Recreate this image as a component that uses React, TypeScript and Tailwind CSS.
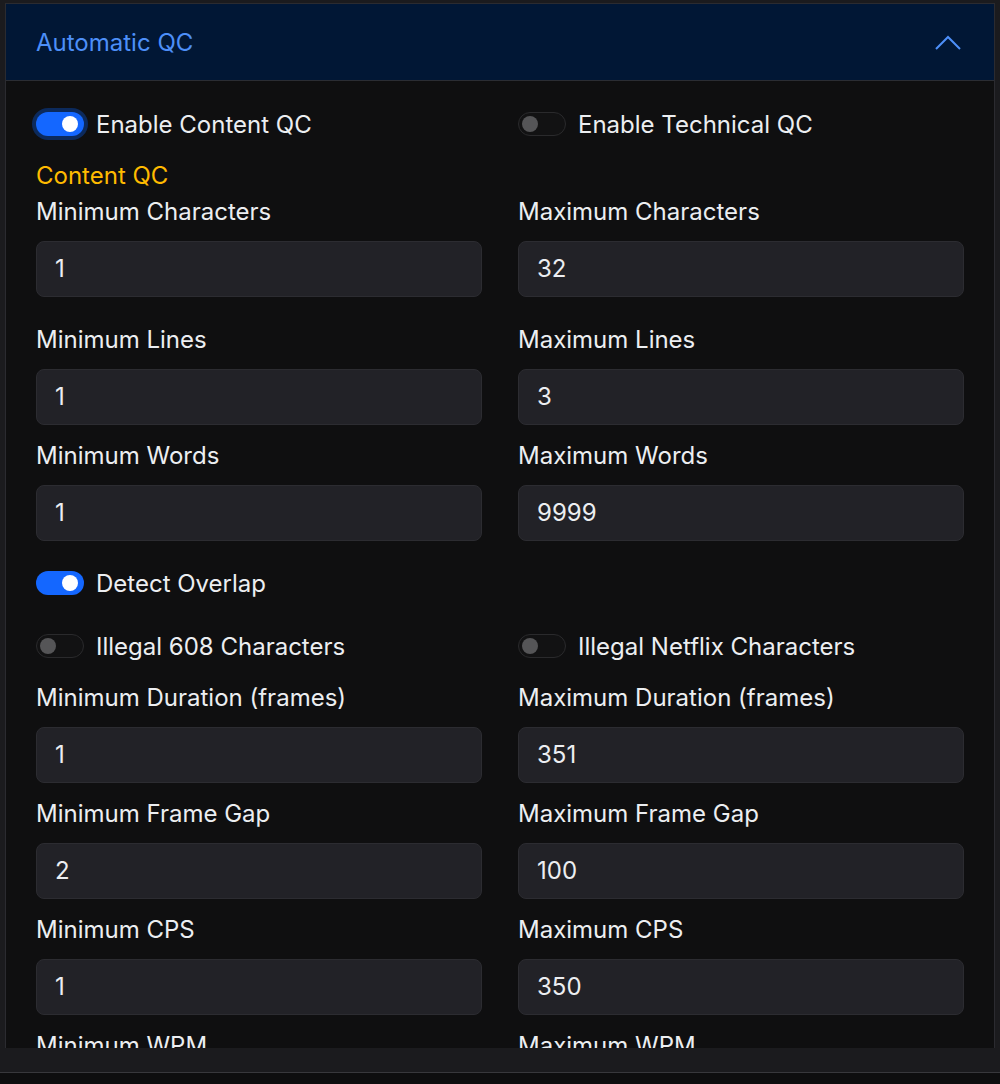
import React from "react";

const font = { fontFamily: "Inter, 'Noto Sans', sans-serif" };

function Toggle({ on, ring }: { on: boolean; ring?: boolean }) {
  if (on) {
    return (
      <div className={`relative h-[24px] w-[48px] shrink-0 rounded-full bg-[#1467ff] ${ring ? "ring-4 ring-[#0c2a5c]" : ""}`}>
        <div className="absolute right-[6px] top-[4px] h-[16px] w-[16px] rounded-full bg-white" />
      </div>
    );
  }
  return (
    <div className="relative h-[24px] w-[48px] shrink-0 rounded-full border border-[#2a2a2c] bg-[#121213]">
      <div className="absolute left-[3px] top-[3px] h-[16px] w-[16px] rounded-full bg-[#555557]" />
    </div>
  );
}

function ToggleLabel({ on, ring, label }: { on: boolean; ring?: boolean; label: string }) {
  return (
    <div className="flex h-[30px] items-center">
      <Toggle on={on} ring={ring} />
      <span className="ml-[12px] pt-[2px] text-[24px] leading-[30px] text-[#eceef1]">{label}</span>
    </div>
  );
}

function Field({ label, value }: { label: string; value: string }) {
  return (
    <div className="flex flex-col">
      <div className="h-[30px] text-[24px] leading-[32px] text-[#eceef1]">{label}</div>
      <div className="mt-[15px] flex h-[56px] items-center rounded-[8px] border border-[#2c2c31] bg-[#222227] pl-[18px] text-[24px] text-[#eceef1]">
        {value}
      </div>
    </div>
  );
}

function Row({ mt, children }: { mt: string; children: React.ReactNode }) {
  return <div className={`grid grid-cols-2 gap-x-[36px] ${mt}`}>{children}</div>;
}

export default function App() {
  return (
    <div className="flex h-[1084px] w-[1000px] flex-col overflow-hidden bg-[#1b1b1e]" style={font}>
      <div className="h-[1048px] overflow-hidden px-[5px] pt-[3px]">
        <div className="border-x border-t border-[#2b2b30] bg-[#0f0f10]">
          <div className="flex h-[77px] items-center justify-between border-b border-[#2b2d33] bg-[#011735] pl-[30px] pr-[32px] pt-[2px]">
            <span className="text-[24px] text-[#4d8ff8]">Automatic QC</span>
            <svg width="28" height="16" viewBox="0 0 28 16" fill="none">
              <path d="M2 14 L14 2 L26 14" stroke="#4d8ff8" strokeWidth="2" />
            </svg>
          </div>
          <div className="px-[30px] pt-[28px] pb-[40px]">
            <Row mt="">
              <ToggleLabel on ring label="Enable Content QC" />
              <ToggleLabel on={false} label="Enable Technical QC" />
            </Row>
            <div className="mt-[21px] h-[30px] text-[24px] leading-[32px] text-[#ffbb00]">Content QC</div>
            <Row mt="mt-[6px]">
              <Field label="Minimum Characters" value="1" />
              <Field label="Maximum Characters" value="32" />
            </Row>
            <Row mt="mt-[27px]">
              <Field label="Minimum Lines" value="1" />
              <Field label="Maximum Lines" value="3" />
            </Row>
            <Row mt="mt-[15px]">
              <Field label="Minimum Words" value="1" />
              <Field label="Maximum Words" value="9999" />
            </Row>
            <div className="mt-[27px]">
              <ToggleLabel on label="Detect Overlap" />
            </div>
            <Row mt="mt-[33px]">
              <ToggleLabel on={false} label="Illegal 608 Characters" />
              <ToggleLabel on={false} label="Illegal Netflix Characters" />
            </Row>
            <Row mt="mt-[21px]">
              <Field label="Minimum Duration (frames)" value="1" />
              <Field label="Maximum Duration (frames)" value="351" />
            </Row>
            <Row mt="mt-[15px]">
              <Field label="Minimum Frame Gap" value="2" />
              <Field label="Maximum Frame Gap" value="100" />
            </Row>
            <Row mt="mt-[15px]">
              <Field label="Minimum CPS" value="1" />
              <Field label="Maximum CPS" value="350" />
            </Row>
            <Row mt="mt-[15px]">
              <Field label="Minimum WPM" value="1" />
              <Field label="Maximum WPM" value="250" />
            </Row>
          </div>
        </div>
      </div>
      <div className="h-[24px] shrink-0 bg-[#1b1b1e]" />
      <div className="h-[1px] shrink-0 bg-[#38383c]" />
      <div className="flex-1 bg-[#0e0e0f]" />
    </div>
  );
}
